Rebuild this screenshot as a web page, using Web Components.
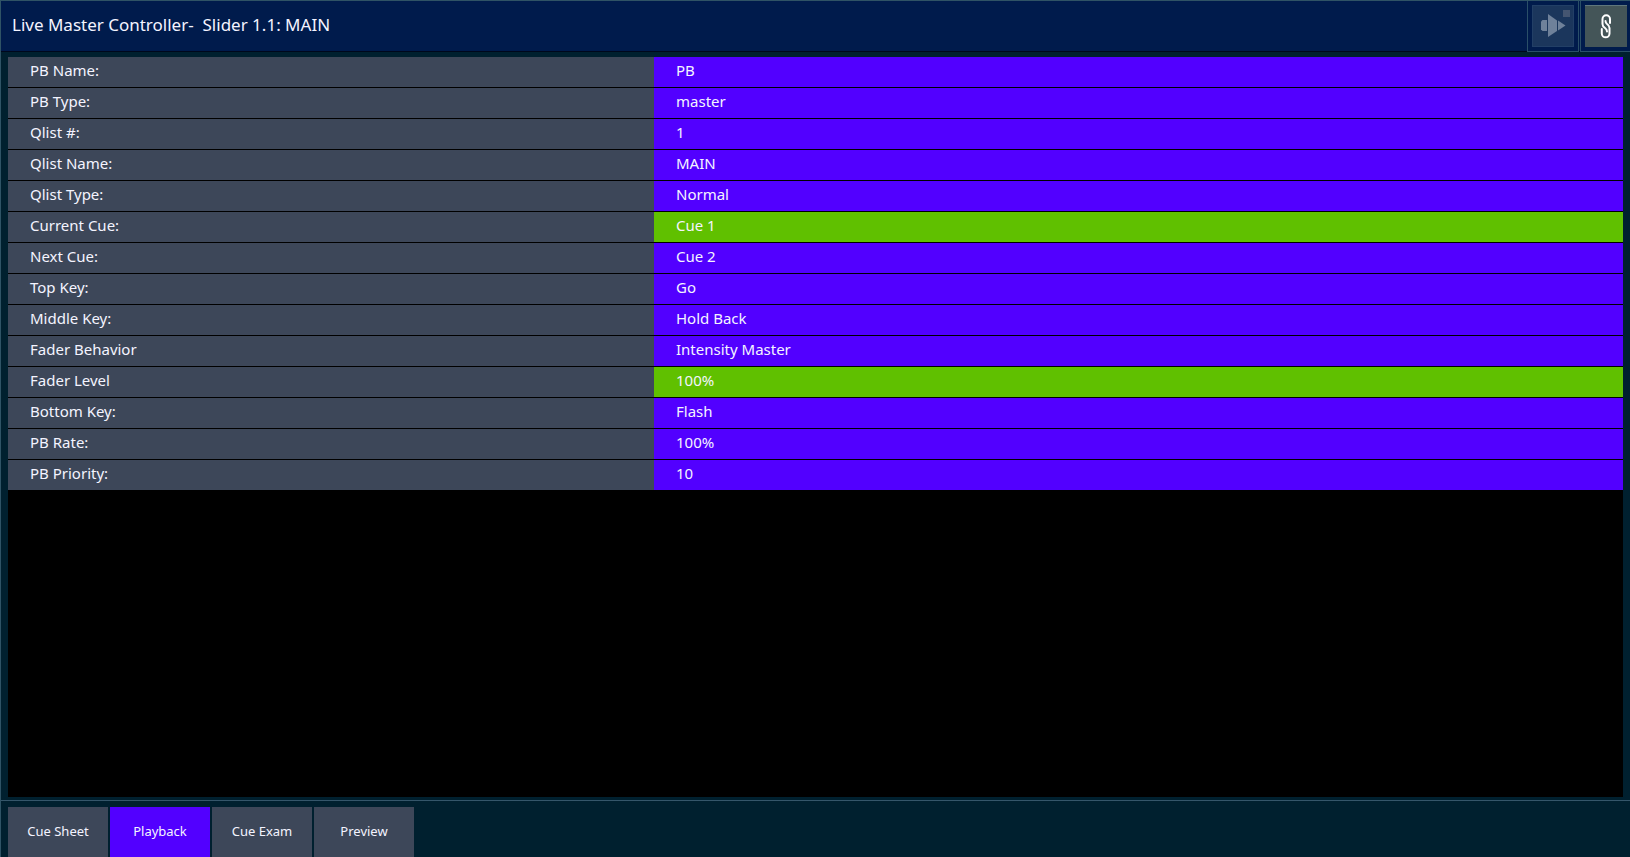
<!DOCTYPE html>
<html lang="en">
<head>
<meta charset="utf-8">
<meta name="viewport" content="width=device-width, initial-scale=1">
<title>Live Master Controller</title>
<style>
  html, body { margin: 0; height: 100%; }
  body { background: #00202f; color: #f4f4ff; font-family: "Noto Sans", "Open Sans", sans-serif; }
</style>
</head>
<body>
<controller-window>
  <window-header slot="header">
    Live Master Controller-&nbsp; Slider 1.1: MAIN
    <icon-button slot="actions" label="Follow playback" muted>
      <svg width="42" height="42" viewBox="0 0 42 42" aria-hidden="true">
        <rect x="31" y="5" width="7" height="7" fill="#445571"/>
        <g fill="#6f819a">
          <path d="M9 16.500 10.500 15H15v11h-4.500L9 24.500z"/>
          <path d="M16 9l9 6.500v10.500L16 32z"/>
          <path d="M26 15.500l7.500 5-7.500 5z"/>
        </g>
      </svg>
    </icon-button>
    <icon-button slot="actions" label="Link">
      <svg width="42" height="42" viewBox="0 0 42 42" fill="none" stroke="#fff" stroke-width="2" stroke-linecap="round" aria-hidden="true">
        <path d="M25 18V14a3.700 3.700 0 0 0-7.500 0v5c0 2 1 3 2.500 4 1.500 1 2 1.500 2 3.500"/>
        <path d="M16.800 24v4.500a3.800 3.800 0 0 0 7.700 0V23c0-2-1-3-2.400-4-1.200-.9-1.600-1.500-1.600-3"/>
      </svg>
    </icon-button>
  </window-header>
  <property-table></property-table>
  <tab-strip slot="footer">
    <tab-button>Cue Sheet</tab-button>
    <tab-button selected>Playback</tab-button>
    <tab-button>Cue Exam</tab-button>
    <tab-button>Preview</tab-button>
  </tab-strip>
</controller-window>

<script>
const define = (name, markup, setup) => {
  const template = document.createElement('template');
  template.innerHTML = markup;
  customElements.define(name, class extends HTMLElement {
    constructor() {
      super();
      this.attachShadow({ mode: 'open' }).append(template.content.cloneNode(true));
    }
    connectedCallback() { if (setup) setup(this, this.shadowRoot); }
  });
};

define('controller-window', `
  <style>
    :host { display: flex; flex-direction: column; box-sizing: border-box; min-height: 100vh;
            border: solid #2f5365; border-width: 1px 0 0 1px; background: #00202f; }
    main { flex: 1; display: flex; margin: 5px 7px 3px; background: #000; }
  </style>
  <slot name="header"></slot>
  <main><slot></slot></main>
  <slot name="footer"></slot>`);

define('window-header', `
  <style>
    :host { display: block; }
    header { display: flex; height: 50px; background: #001b4c; border-bottom: 1px solid #00081c; }
    h1 { flex: 1; margin: 0; padding-left: 11px; font-size: 17px; line-height: 48px; font-weight: 400; white-space: nowrap; }
    .actions { display: flex; gap: 1px; }
  </style>
  <header><h1><slot></slot></h1><div class="actions"><slot name="actions"></slot></div></header>`);

define('icon-button', `
  <style>
    :host { display: block; box-sizing: border-box; width: 52px; height: 51px; padding: 4px 4px 0;
            border: solid #2a4f68; border-width: 0 1px 1px 1px; }
    :host(:last-of-type) { border-right: 0; width: 50px; padding-right: 3px; }
    button { display: block; box-sizing: border-box; width: 42px; height: 42px; padding: 0; border: 0; background: #445558; box-shadow: inset 0 1px #60777c; }
    :host([muted]) button { background: #1b365c; box-shadow: inset 0 0 0 1px #223f66; }
  </style>
  <button type="button"><slot></slot></button>`,
  (host, root) => root.querySelector('button').setAttribute('aria-label', host.getAttribute('label')));

const properties = [
  ['PB Name:', 'PB'],
  ['PB Type:', 'master'],
  ['Qlist #:', '1'],
  ['Qlist Name:', 'MAIN'],
  ['Qlist Type:', 'Normal'],
  ['Current Cue:', 'Cue 1', 'active'],
  ['Next Cue:', 'Cue 2'],
  ['Top Key:', 'Go'],
  ['Middle Key:', 'Hold Back'],
  ['Fader Behavior', 'Intensity Master'],
  ['Fader Level', '100%', 'active'],
  ['Bottom Key:', 'Flash'],
  ['PB Rate:', '100%'],
  ['PB Priority:', '10']
];

define('property-table', `
  <style>
    :host { display: block; flex: 1; }
    table { width: 100%; table-layout: fixed; border-collapse: separate; border-spacing: 0; font-size: 15px; line-height: 26px; }
    th, td { padding: 0 22px 4px; text-align: left; font-weight: 400; border-bottom: 1px solid #000; }
    th { width: 40%; box-sizing: border-box; background: #3d4759; }
    td { background: #5200ff; }
    td.active { background: #60c000; }
  </style>
  <table><tbody></tbody></table>`,
  (host, root) => {
    const body = root.querySelector('tbody');
    body.replaceChildren();
    for (const [name, value, state] of properties) {
      const row = body.insertRow();
      const head = document.createElement('th');
      head.scope = 'row';
      head.textContent = name;
      row.append(head);
      const cell = row.insertCell();
      cell.textContent = value;
      if (state) cell.className = state;
    }
  });

define('tab-strip', `
  <style>
    :host { display: block; border-top: 1px solid #35566a; }
    nav { display: flex; gap: 2px; padding: 6px 7px 0; }
  </style>
  <nav aria-label="Views"><slot></slot></nav>`);

define('tab-button', `
  <style>
    :host { display: block; width: 100px; }
    button { display: block; width: 100%; height: 50px; padding: 0 0 2px; border: 0; background: #3d4759;
             color: inherit; font-family: inherit; font-size: 13px; line-height: 20px; }
    :host([selected]) button { background: #5200ff; }
  </style>
  <button type="button"><slot></slot></button>`,
  (host, root) => root.querySelector('button').setAttribute('aria-pressed', host.hasAttribute('selected')));
</script>
</body>
</html>
